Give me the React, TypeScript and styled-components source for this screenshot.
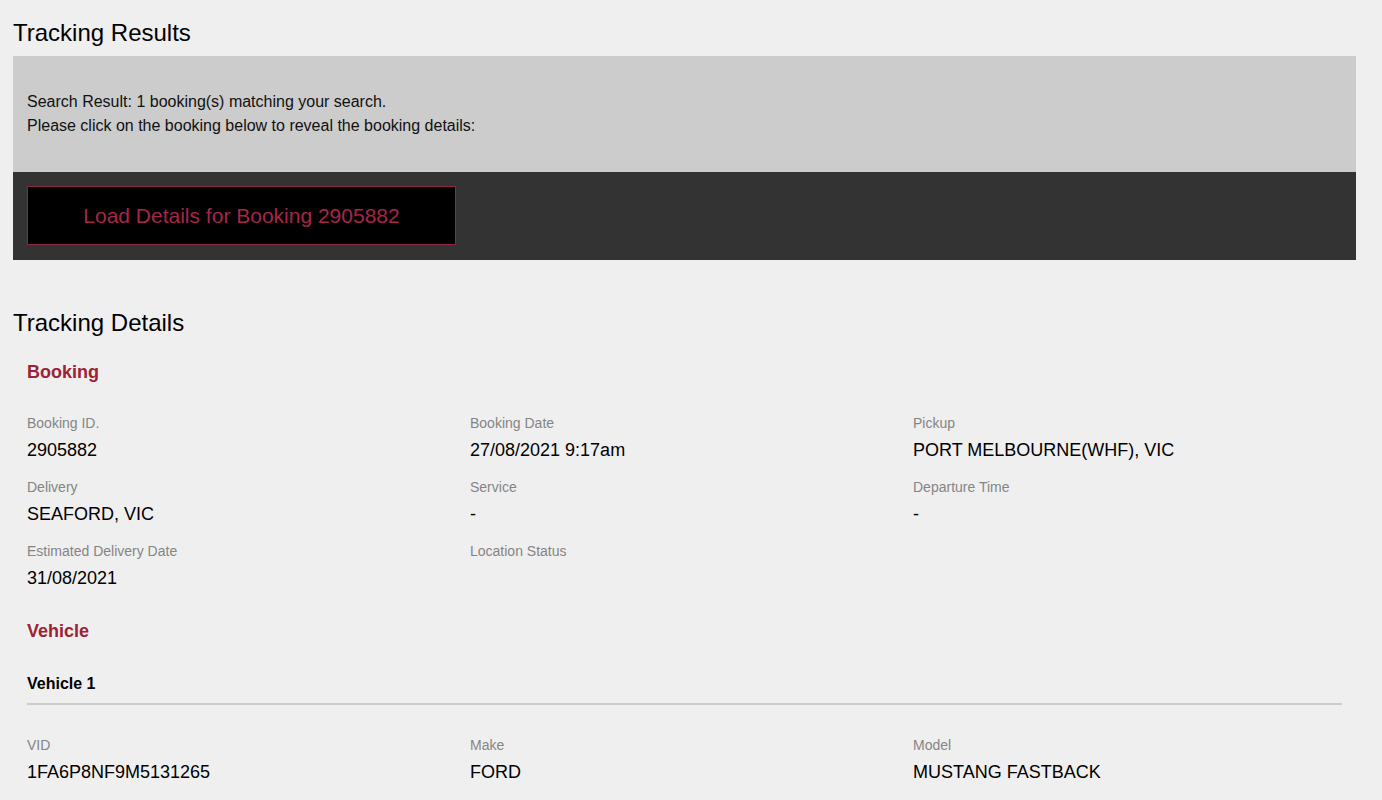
import React from 'react';
import styled, { createGlobalStyle } from 'styled-components';

const GlobalStyle = createGlobalStyle`
  html, body {
    margin: 0;
    padding: 0;
    background: #efefef;
    font-family: 'Liberation Sans', Arial, sans-serif;
    color: #000;
  }
`;

interface Field {
  label: string;
  value: string;
}

const bookingFields: Field[] = [
  { label: 'Booking ID.', value: '2905882' },
  { label: 'Booking Date', value: '27/08/2021 9:17am' },
  { label: 'Pickup', value: 'PORT MELBOURNE(WHF), VIC' },
  { label: 'Delivery', value: 'SEAFORD, VIC' },
  { label: 'Service', value: '-' },
  { label: 'Departure Time', value: '-' },
  { label: 'Estimated Delivery Date', value: '31/08/2021' },
  { label: 'Location Status', value: '' },
];

const vehicleFields: Field[] = [
  { label: 'VID', value: '1FA6P8NF9M5131265' },
  { label: 'Make', value: 'FORD' },
  { label: 'Model', value: 'MUSTANG FASTBACK' },
];

const FieldGrid = ({ fields }: { fields: Field[] }) => (
  <StyledGrid>
    {fields.map((f) => (
      <StyledField key={f.label}>
        <StyledLabel>{f.label}</StyledLabel>
        <StyledValue>{f.value || '\u00a0'}</StyledValue>
      </StyledField>
    ))}
  </StyledGrid>
);

const App: React.FC = () => {
  return (
    <>
      <GlobalStyle />
      <StyledPage>
        <StyledTitle>Tracking Results</StyledTitle>
        <StyledResultBox>
          <StyledMessage>
            Search Result: 1 booking(s) matching your search.
            <br />
            Please click on the booking below to reveal the booking details:
          </StyledMessage>
        </StyledResultBox>
        <StyledButtonBar>
          <StyledLoadButton type="button">Load Details for Booking 2905882</StyledLoadButton>
        </StyledButtonBar>

        <StyledTitle $gap={49}>Tracking Details</StyledTitle>
        <StyledDetails>
          <StyledSectionHead>Booking</StyledSectionHead>
          <FieldGrid fields={bookingFields} />

          <StyledSectionHead $gap={31}>Vehicle</StyledSectionHead>
          <StyledVehicleName>Vehicle 1</StyledVehicleName>
          <FieldGrid fields={vehicleFields} />
        </StyledDetails>
      </StyledPage>
    </>
  );
};

const StyledPage = styled.div`
  padding: 0 26px 40px 13px;
`;

const StyledTitle = styled.h2<{ $gap?: number }>`
  margin: ${(p) => p.$gap ?? 19}px 0 0;
  font-size: 24px;
  line-height: 28px;
  font-weight: normal;
  color: #000;
`;

const StyledResultBox = styled.div`
  margin-top: 9px;
  background: #cccccc;
  padding: 34px 14px 34px;
`;

const StyledMessage = styled.p`
  margin: 0;
  font-size: 16px;
  line-height: 24px;
  color: #111;
`;

const StyledButtonBar = styled.div`
  background: #333333;
  padding: 14px 14px 15px;
`;

const StyledLoadButton = styled.button`
  display: block;
  width: 429px;
  height: 59px;
  padding: 0;
  background: #000;
  border: 1px solid #8f2540;
  color: #a6264a;
  font-family: 'Liberation Sans', Arial, sans-serif;
  font-size: 21px;
  cursor: pointer;
`;

const StyledDetails = styled.div`
  padding: 0 14px;
`;

const StyledSectionHead = styled.h3<{ $gap?: number }>`
  margin: ${(p) => p.$gap ?? 24}px 0 0;
  font-size: 18px;
  line-height: 22px;
  font-weight: bold;
  color: #9b2335;
`;

const StyledVehicleName = styled.h4`
  margin: 33px 0 0;
  padding-bottom: 10px;
  font-size: 16px;
  line-height: 18px;
  font-weight: bold;
  color: #000;
  border-bottom: 2px solid #cccccc;
`;

const StyledGrid = styled.div`
  display: grid;
  grid-template-columns: repeat(3, 443px);
  row-gap: 18px;
  margin-top: 32px;
`;

const StyledField = styled.div`
  display: flex;
  flex-direction: column;
  gap: 8px;
`;

const StyledLabel = styled.span`
  font-size: 14px;
  line-height: 16px;
  color: #858585;
`;

const StyledValue = styled.span`
  font-size: 18px;
  line-height: 22px;
  color: #000;
`;

export default App;
